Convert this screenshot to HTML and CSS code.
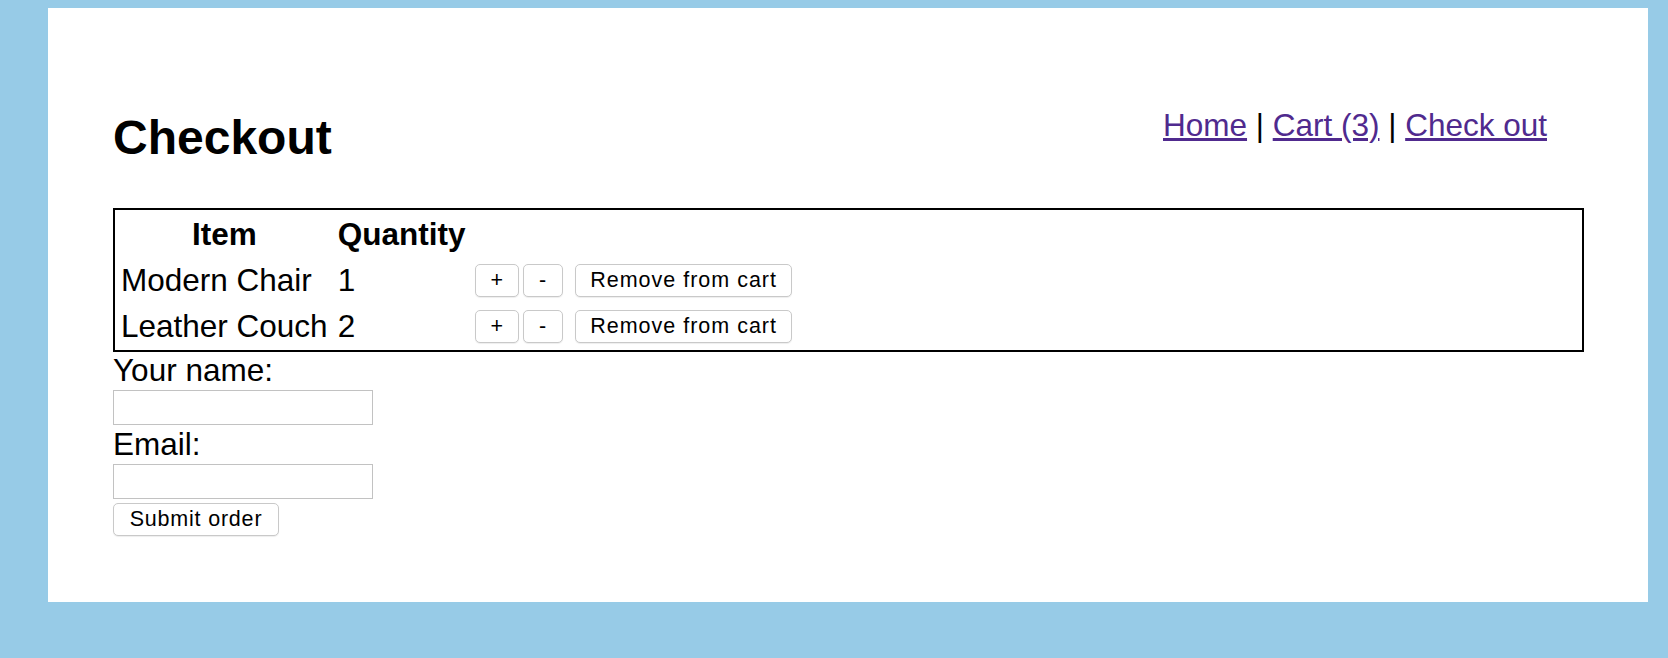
FILE: index.html
```html
<!DOCTYPE html>
<html lang="en">
<head>
<meta charset="utf-8">
<title>Checkout</title>
<link rel="stylesheet" href="styles.css">
</head>
<body>
<div class="page">
  <header class="top">
    <h1 class="title">Checkout</h1>
    <nav class="nav"><a class="link" href="#">Home</a> | <a class="link" href="#">Cart (3)</a> | <a class="link" href="#">Check out</a></nav>
  </header>
  <table class="cart">
    <thead>
      <tr><th class="c-item">Item</th><th class="c-qty">Quantity</th><th class="c-act"></th></tr>
    </thead>
    <tbody>
      <tr><td class="c-item">Modern Chair</td><td class="c-qty">1</td><td class="c-act"><button class="btn" type="button">+</button><button class="btn minus" type="button">-</button><button class="btn remove" type="button">Remove from cart</button></td></tr>
      <tr><td class="c-item">Leather Couch</td><td class="c-qty">2</td><td class="c-act"><button class="btn" type="button">+</button><button class="btn minus" type="button">-</button><button class="btn remove" type="button">Remove from cart</button></td></tr>
    </tbody>
  </table>
  <form class="order">
    <label class="lbl lbl-first" for="name">Your name:</label>
    <input id="name" class="field" type="text">
    <label class="lbl" for="email">Email:</label>
    <input id="email" class="field" type="text">
    <button class="btn submit" type="button">Submit order</button>
  </form>
</div>
</body>
</html>
```

FILE: styles.css
```css
html, body {
  margin: 0;
  padding: 0;
}
body {
  background: #97cbe7;
  font-family: "Liberation Sans", Arial, Helvetica, sans-serif;
  color: #000;
}
.page {
  box-sizing: border-box;
  margin: 8px 0 0 48px;
  width: 1600px;
  height: 594px;
  background: #fff;
  padding: 99px 64px 0 65px;
}
.top {
  display: flex;
  justify-content: space-between;
  align-items: flex-start;
}
.title {
  margin: 3px 0 0 0;
  font-size: 48px;
  line-height: 56px;
  font-weight: bold;
}
.nav {
  margin-right: 37px;
  font-size: 31.5px;
  line-height: 36px;
}
.link {
  color: #502a8e;
  text-decoration: underline;
}
.cart {
  margin-top: 42px;
  width: 100%;
  border: 2px solid #000;
  border-spacing: 2px;
  font-size: 31.5px;
}
.cart th,
.cart td {
  padding: 0 4px;
  height: 44px;
  line-height: 44px;
  white-space: nowrap;
  vertical-align: middle;
}
.cart th {
  font-weight: bold;
  text-align: center;
}
.cart td {
  text-align: left;
}
.cart .c-act {
  width: 100%;
  font-size: 0;
  line-height: 0;
}
.btn {
  box-sizing: border-box;
  font-family: "Liberation Sans", Arial, sans-serif;
  font-size: 21.5px;
  letter-spacing: 1px;
  line-height: 31px;
  height: 33px;
  padding: 0 14px;
  margin: 0;
  background: #fff;
  color: #000;
  border: 1px solid #c9c9c9;
  border-radius: 5px;
  box-shadow: 0 1px 1px rgba(0, 0, 0, 0.07);
  vertical-align: middle;
}
.btn + .btn {
  margin-left: 4px;
}
.btn.minus {
  padding: 0 15px;
}
.btn.remove {
  margin-left: 12px;
}
.order {
  display: flex;
  flex-direction: column;
  align-items: flex-start;
  font-size: 31.5px;
}
.lbl {
  line-height: 38px;
}
.lbl-first {
  line-height: 36px;
}
.field {
  box-sizing: border-box;
  width: 260px;
  height: 35px;
  margin: 1.5px 0 0 0;
  border: 1px solid #c2c2c2;
  padding: 0 4px;
  font-size: 20px;
  background: #fff;
}
.submit {
  margin-top: 3.5px;
  width: 166px;
  padding: 0 10px;
  letter-spacing: 0.8px;
}
```
